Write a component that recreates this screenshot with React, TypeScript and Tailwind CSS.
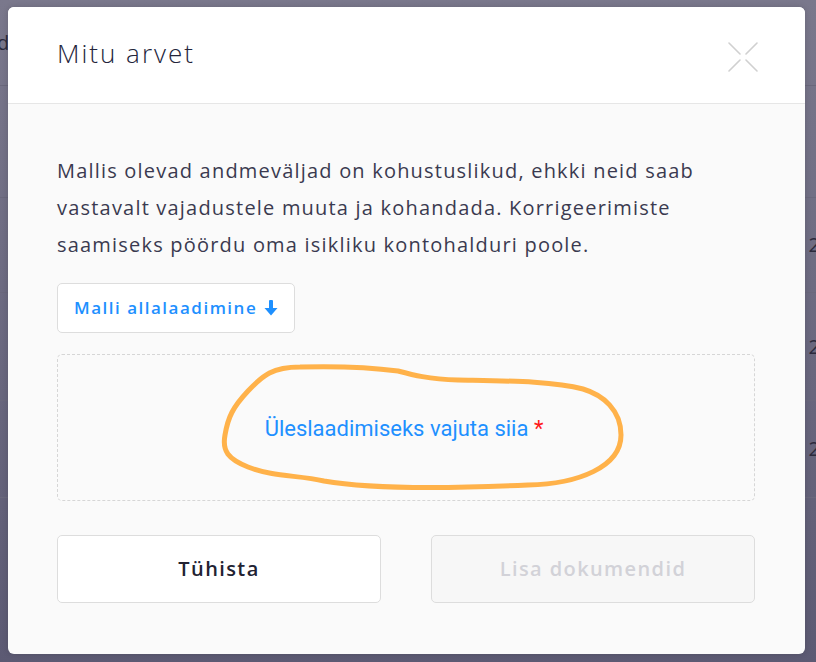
import React from "react";

const rows = [
  { h: "h-[86px]", right: "" },
  { h: "h-[112px]", right: "" },
  { h: "h-[95px]", right: "2" },
  { h: "h-[108px]", right: "2" },
  { h: "h-[97px]", right: "2" },
];

function CloseIcon() {
  return (
    <svg width="30" height="30" viewBox="0 0 30 30" fill="none" stroke="#d0d0d0" strokeWidth="1.6" strokeLinecap="round">
      <line x1="1" y1="1" x2="12" y2="12" />
      <line x1="18" y1="18" x2="29" y2="29" />
      <line x1="29" y1="1" x2="18" y2="12" />
      <line x1="1" y1="29" x2="12" y2="18" />
    </svg>
  );
}

function Scribble() {
  return (
    <svg
      className="absolute left-[160px] top-[6px] pointer-events-none"
      width="410"
      height="130"
      viewBox="160 6 410 130"
      fill="none"
    >
      <path
        d="M242 12 C 215 12, 205 20, 190 36 C 175 52, 170 62, 167 80 C 164 96, 170 104, 190 112 C 215 122, 240 120, 266 126 C 300 132, 360 135, 470 130 C 520 129, 563 112, 563 80 C 563 55, 545 40, 525 34 C 495 26, 450 26, 400 25 C 370 24, 355 20, 340 16 C 310 12, 280 11, 242 12 Z"
        stroke="#ffb24a"
        strokeWidth="5"
        strokeLinejoin="round"
      />
    </svg>
  );
}

export default function App() {
  return (
    <div className="relative w-[816px] h-[662px] overflow-hidden bg-gradient-to-b from-[#7a788c] to-[#5c5a73] font-['Open_Sans',sans-serif]">
      {/* page behind the overlay */}
      <div className="flex flex-col">
        {rows.map((r, i) => (
          <div key={i} className={`${r.h} flex justify-between items-center border-b border-[#6a687c] text-[#2b2a3c] text-[20px]`}>
            <span className="-ml-[3px]">{i === 0 ? "d" : ""}</span>
            <span className="-mr-[4px]">{r.right}</span>
          </div>
        ))}
      </div>

      {/* modal */}
      <div className="absolute left-[8px] top-[7px] w-[797px] h-[647px] rounded-[6px] bg-[#fafafa] overflow-hidden shadow-[0_0_6px_rgba(0,0,0,0.15)]">
        <div className="h-[97px] bg-white border-b border-[#e6e6e6] flex items-center justify-between pl-[49px] pr-[47px]">
          <h1 className="text-[26px] font-light text-[#23243a] tracking-[2px] pb-[3px]">Mitu arvet</h1>
          <div className="pt-[3px]">
            <CloseIcon />
          </div>
        </div>

        <div className="pl-[49px] pr-[50px] pt-[48px] flex flex-col">
          <p className="text-[20px] leading-[37px] text-[#3a3a50] tracking-[1.2px] w-[650px]">
            Mallis olevad andmeväljad on kohustuslikud, ehkki neid saab vastavalt vajadustele muuta ja kohandada. Korrigeerimiste saamiseks pöördu oma isikliku kontohalduri poole.
          </p>

          <button className="mt-[20px] self-start h-[50px] w-[238px] rounded-[5px] border border-[#dddddd] bg-white flex items-center pl-[16px] gap-[7px] text-[#1e90ff] text-[17px] font-semibold tracking-[1.5px]">
            Malli allalaadimine
            <svg width="14" height="18" viewBox="0 0 14 18" fill="#1e90ff">
              <rect x="5" y="1" width="4" height="10" rx="1" />
              <path d="M0.5 9 L7 16.5 L13.5 9 Z" />
            </svg>
          </button>

          <div className="relative mt-[21px] h-[147px] rounded-[5px] border border-dashed border-[#d6d6d6] bg-[#fafafa] flex items-center justify-center">
            <Scribble />
            <span className="relative font-['Roboto',sans-serif] text-[22px] text-[#1e90ff] pt-[1px] pr-[4px]">
              Üleslaadimiseks vajuta siia <span className="text-[#ff1a1a]">*</span>
            </span>
          </div>

          <div className="mt-[34px] flex gap-[50px]">
            <button className="w-[324px] h-[68px] rounded-[5px] border border-[#dddddd] bg-white text-[20px] font-semibold text-[#222232] tracking-[1.4px]">
              Tühista
            </button>
            <button className="w-[324px] h-[68px] rounded-[5px] border border-[#dddddd] bg-[#f7f7f7] text-[20px] font-semibold text-[#d2d2d8] tracking-[1.4px]">
              Lisa dokumendid
            </button>
          </div>
        </div>
      </div>
    </div>
  );
}
